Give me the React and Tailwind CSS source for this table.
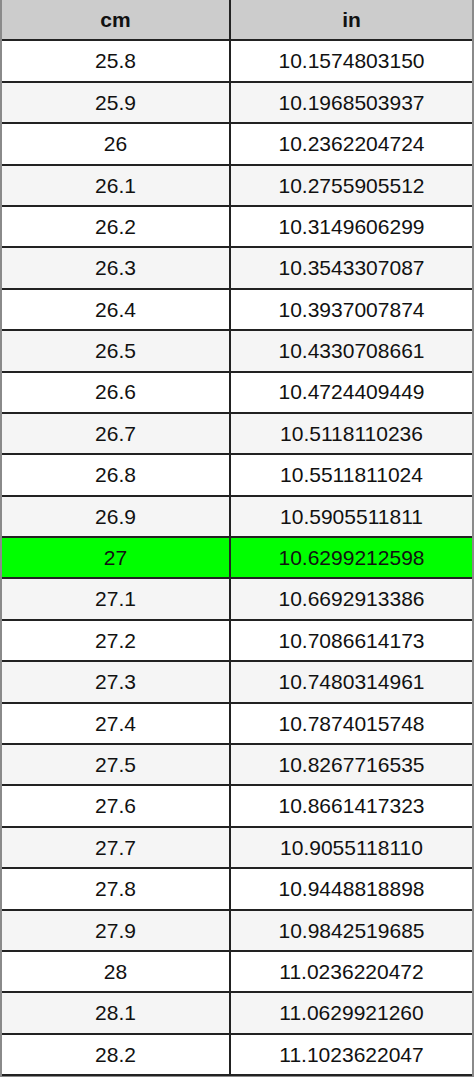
const rows = [
  ['25.8', '10.1574803150'],
  ['25.9', '10.1968503937'],
  ['26', '10.2362204724'],
  ['26.1', '10.2755905512'],
  ['26.2', '10.3149606299'],
  ['26.3', '10.3543307087'],
  ['26.4', '10.3937007874'],
  ['26.5', '10.4330708661'],
  ['26.6', '10.4724409449'],
  ['26.7', '10.5118110236'],
  ['26.8', '10.5511811024'],
  ['26.9', '10.5905511811'],
  ['27', '10.6299212598'],
  ['27.1', '10.6692913386'],
  ['27.2', '10.7086614173'],
  ['27.3', '10.7480314961'],
  ['27.4', '10.7874015748'],
  ['27.5', '10.8267716535'],
  ['27.6', '10.8661417323'],
  ['27.7', '10.9055118110'],
  ['27.8', '10.9448818898'],
  ['27.9', '10.9842519685'],
  ['28', '11.0236220472'],
  ['28.1', '11.0629921260'],
  ['28.2', '11.1023622047'],
];

export default function App() {
  return (
    <div className="w-[474px] h-[1077px] flex flex-col bg-[#8a8a8a] px-[2px] pb-[1px] font-['Liberation_Sans',Arial,sans-serif] text-[21px] text-[#111]">
      {/* header */}
      <div className="flex-1 grid grid-cols-[229px_1fr] bg-[#cccccc] border-b-2 border-[#222]">
        <div className="flex items-center justify-center font-bold border-r-2 border-[#222]">cm</div>
        <div className="flex items-center justify-center font-bold">in</div>
      </div>
      {rows.map(([cm, inch], i) => {
        const hl = cm === '27';
        const bg = hl ? 'bg-[#00ff00]' : i % 2 === 0 ? 'bg-white' : 'bg-[#f5f5f5]';
        return (
          <div key={cm} className={`flex-1 grid grid-cols-[229px_1fr] border-b-2 border-[#222] ${bg}`}>
            <div className="flex items-center justify-center border-r-2 border-[#222]">{cm}</div>
            <div className="flex items-center justify-center">{inch}</div>
          </div>
        );
      })}
    </div>
  );
}
